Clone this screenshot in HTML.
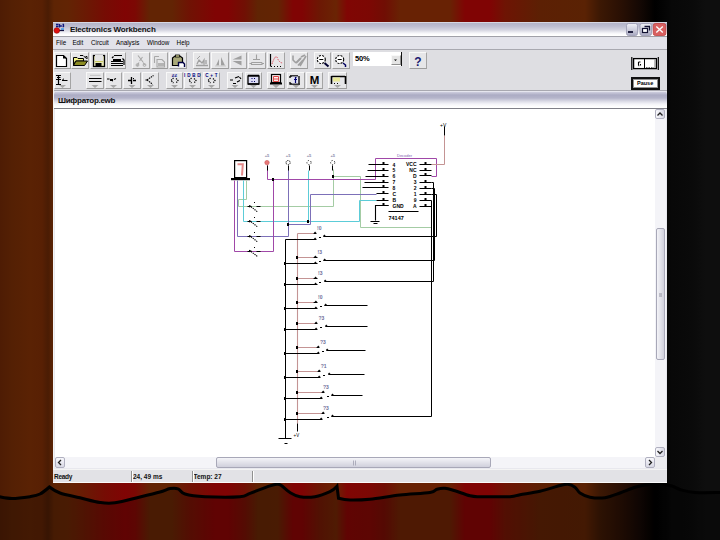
<!DOCTYPE html>
<html><head><meta charset="utf-8">
<style>
*{margin:0;padding:0;box-sizing:border-box}
html,body{width:720px;height:540px;overflow:hidden}
body{position:relative;font-family:"Liberation Sans",sans-serif;
background:linear-gradient(90deg,#4e1c04 0px,#542004 12px,#5a2204 30px,#582004 42px,#4a1c04 48px,#5e2404 54px,#622404 68px,#6a1a04 85px,#760c04 105px,#800404 125px,#7c0804 135px,#622404 150px,#622404 172px,#701204 190px,#800404 215px,#800404 228px,#701004 245px,#602404 258px,#622404 278px,#800404 293px,#800404 302px,#6c1804 320px,#6a2404 336px,#800604 347px,#7c0804 370px,#700e04 385px,#682204 400px,#682204 450px,#800404 465px,#800404 490px,#6e1404 505px,#5c2004 540px,#5a2204 585px,#3c1804 600px,#2a1004 620px,#140804 640px,#000000 655px,#080808 672px,#0a0a0a 692px,#0e0e0e 706px,#0e0e0e 720px);}
.a{position:absolute}
svg{position:absolute;left:0;top:0}
.btn{position:absolute;background:#e6e6e8;border-top:1px solid #f8f8f8;border-left:1px solid #f8f8f8;border-right:1px solid #a4a4a4;border-bottom:1px solid #9c9c9c}
.txt{position:absolute;white-space:nowrap;color:#111;line-height:1}
</style></head><body>
<svg width="720" height="540" viewBox="0 0 720 540">
<path d="M-2.0,496.5 C0.3,496.8 6.7,498.5 12.0,498.5 C17.3,498.5 25.3,497.4 30.0,496.7 C34.7,495.9 36.8,495.6 40.0,494.0 C43.2,492.4 49.4,487.0 49.4,487.0 C49.4,487.0 54.9,491.2 60.0,493.0 C65.1,494.8 73.3,496.2 80.0,497.8 C86.7,499.4 94.2,501.7 100.0,502.5 C105.8,503.3 108.3,503.7 115.0,502.8 C121.7,501.9 132.5,498.8 140.0,497.0 C147.5,495.2 155.0,493.4 160.0,492.0 C165.0,490.6 167.0,489.1 170.0,488.6 C173.0,488.1 175.5,487.9 178.0,488.8 C180.5,489.7 180.5,492.7 185.0,494.0 C189.5,495.3 195.8,496.2 205.0,496.7 C214.2,497.1 232.5,497.3 240.0,496.7 C247.5,496.1 245.0,495.1 250.0,493.3 C255.0,491.5 265.5,487.3 270.0,485.8 C274.5,484.3 275.2,484.3 277.0,484.2 C278.8,484.1 278.8,483.8 281.0,485.2 C283.2,486.6 286.8,490.6 290.0,492.5 C293.2,494.4 295.8,496.0 300.0,496.7 C304.2,497.4 310.0,497.5 315.0,496.7 C320.0,495.9 326.3,493.4 330.0,491.7 C333.7,490.0 337.0,486.3 337.0,486.3 C337.0,486.3 338.5,498.3 338.5,498.3 C338.5,498.3 344.8,499.9 350.0,500.0 C355.2,500.1 361.7,500.0 370.0,499.2 C378.3,498.4 390.0,496.1 400.0,495.0 C410.0,493.9 423.8,493.5 430.0,492.5 C436.2,491.5 434.5,489.9 437.0,489.2 C439.5,488.5 442.0,488.0 445.0,488.3 C448.0,488.6 450.8,489.6 455.0,490.8 C459.2,492.1 465.8,494.8 470.0,495.8 C474.2,496.8 473.3,496.6 480.0,496.7 C486.7,496.8 503.3,497.0 510.0,496.7 C516.7,496.4 515.0,495.6 520.0,494.7 C525.0,493.8 533.3,492.8 540.0,491.3 C546.7,489.8 555.3,486.7 560.0,485.5 C564.7,484.3 565.5,484.0 568.0,484.3 C570.5,484.6 573.0,485.8 575.0,487.2 C577.0,488.6 577.5,491.3 580.0,493.0 C582.5,494.7 585.8,496.4 590.0,497.2 C594.2,498.0 600.0,498.4 605.0,497.7 C610.0,497.0 615.0,494.8 620.0,493.0 C625.0,491.2 630.8,488.5 635.0,487.2 C639.2,485.9 640.8,485.6 645.0,485.0 C649.2,484.4 655.5,483.6 660.0,483.8 C664.5,484.0 668.7,485.1 672.0,486.0 C675.3,486.9 676.2,488.4 680.0,489.5 C683.8,490.6 688.0,492.0 695.0,492.5 C702.0,493.0 717.5,492.5 722.0,492.5 L722,542 L-2,542 Z" fill="rgba(0,0,0,0.25)"/>
<path d="M-2.0,496.5 C0.3,496.8 6.7,498.5 12.0,498.5 C17.3,498.5 25.3,497.4 30.0,496.7 C34.7,495.9 36.8,495.6 40.0,494.0 C43.2,492.4 49.4,487.0 49.4,487.0 C49.4,487.0 54.9,491.2 60.0,493.0 C65.1,494.8 73.3,496.2 80.0,497.8 C86.7,499.4 94.2,501.7 100.0,502.5 C105.8,503.3 108.3,503.7 115.0,502.8 C121.7,501.9 132.5,498.8 140.0,497.0 C147.5,495.2 155.0,493.4 160.0,492.0 C165.0,490.6 167.0,489.1 170.0,488.6 C173.0,488.1 175.5,487.9 178.0,488.8 C180.5,489.7 180.5,492.7 185.0,494.0 C189.5,495.3 195.8,496.2 205.0,496.7 C214.2,497.1 232.5,497.3 240.0,496.7 C247.5,496.1 245.0,495.1 250.0,493.3 C255.0,491.5 265.5,487.3 270.0,485.8 C274.5,484.3 275.2,484.3 277.0,484.2 C278.8,484.1 278.8,483.8 281.0,485.2 C283.2,486.6 286.8,490.6 290.0,492.5 C293.2,494.4 295.8,496.0 300.0,496.7 C304.2,497.4 310.0,497.5 315.0,496.7 C320.0,495.9 326.3,493.4 330.0,491.7 C333.7,490.0 337.0,486.3 337.0,486.3 C337.0,486.3 338.5,498.3 338.5,498.3 C338.5,498.3 344.8,499.9 350.0,500.0 C355.2,500.1 361.7,500.0 370.0,499.2 C378.3,498.4 390.0,496.1 400.0,495.0 C410.0,493.9 423.8,493.5 430.0,492.5 C436.2,491.5 434.5,489.9 437.0,489.2 C439.5,488.5 442.0,488.0 445.0,488.3 C448.0,488.6 450.8,489.6 455.0,490.8 C459.2,492.1 465.8,494.8 470.0,495.8 C474.2,496.8 473.3,496.6 480.0,496.7 C486.7,496.8 503.3,497.0 510.0,496.7 C516.7,496.4 515.0,495.6 520.0,494.7 C525.0,493.8 533.3,492.8 540.0,491.3 C546.7,489.8 555.3,486.7 560.0,485.5 C564.7,484.3 565.5,484.0 568.0,484.3 C570.5,484.6 573.0,485.8 575.0,487.2 C577.0,488.6 577.5,491.3 580.0,493.0 C582.5,494.7 585.8,496.4 590.0,497.2 C594.2,498.0 600.0,498.4 605.0,497.7 C610.0,497.0 615.0,494.8 620.0,493.0 C625.0,491.2 630.8,488.5 635.0,487.2 C639.2,485.9 640.8,485.6 645.0,485.0 C649.2,484.4 655.5,483.6 660.0,483.8 C664.5,484.0 668.7,485.1 672.0,486.0 C675.3,486.9 676.2,488.4 680.0,489.5 C683.8,490.6 688.0,492.0 695.0,492.5 C702.0,493.0 717.5,492.5 722.0,492.5" fill="none" stroke="#000" stroke-width="3"/>
</svg>
<!-- window -->
<div class="a" style="left:53px;top:22px;width:614px;height:461px;background:#e2e2e8;border-left:1px solid #f4f4f4;border-bottom:1px solid #f8f8f8"></div>
<div class="a" style="left:53px;top:22px;width:614px;height:14px;background:linear-gradient(180deg,#f8f8fa 0px,#b4b4c8 1px,#bcbccf 4px,#d4d4e0 8px,#f4f4f8 11px,#ffffff 13px)"></div>
<div class="txt" style="left:70px;top:26px;font-size:8px;font-weight:bold;letter-spacing:-0.15px">Electronics Workbench</div>
<div class="a" style="left:53px;top:36px;width:614px;height:14px;background:#e2e2ea;border-top:1px solid #a0a0a8;border-bottom:1px solid #a8a8b0"></div>
<div class="txt" style="left:56px;top:39.6px;font-size:6.3px;color:#000">File</div>
<div class="txt" style="left:72.4px;top:39.6px;font-size:6.3px;color:#000">Edit</div>
<div class="txt" style="left:91px;top:39.6px;font-size:6.3px;color:#000">Circuit</div>
<div class="txt" style="left:116px;top:39.6px;font-size:6.3px;color:#000">Analysis</div>
<div class="txt" style="left:147px;top:39.6px;font-size:6.3px;color:#000">Window</div>
<div class="txt" style="left:176.6px;top:39.6px;font-size:6.3px;color:#000">Help</div>
<div class="a" style="left:54px;top:50px;width:613px;height:41px;background:#dedee2;border-bottom:1px solid #a8a8b0"></div>
<div class="btn" style="left:54px;top:52px;width:17px;height:17px"></div><div class="btn" style="left:71px;top:52px;width:18px;height:17px"></div><div class="btn" style="left:90px;top:52px;width:18px;height:17px"></div><div class="btn" style="left:108px;top:52px;width:18px;height:17px"></div><div class="btn" style="left:132px;top:52px;width:18px;height:17px"></div><div class="btn" style="left:151px;top:52px;width:17px;height:17px"></div><div class="btn" style="left:169px;top:52px;width:18px;height:17px"></div><div class="btn" style="left:193px;top:52px;width:17px;height:17px"></div><div class="btn" style="left:211px;top:52px;width:18px;height:17px"></div><div class="btn" style="left:230px;top:52px;width:17px;height:17px"></div><div class="btn" style="left:248px;top:52px;width:18px;height:17px"></div><div class="btn" style="left:267px;top:52px;width:18px;height:17px"></div><div class="btn" style="left:290px;top:52px;width:18px;height:17px"></div><div class="btn" style="left:314px;top:52px;width:17px;height:17px"></div><div class="btn" style="left:332px;top:52px;width:18px;height:17px"></div><div class="btn" style="left:409px;top:52px;width:18px;height:17px"></div><div class="btn" style="left:54px;top:72px;width:17px;height:17px"></div><div class="btn" style="left:86px;top:72px;width:18px;height:17px"></div><div class="btn" style="left:105px;top:72px;width:17px;height:17px"></div><div class="btn" style="left:123px;top:72px;width:18px;height:17px"></div><div class="btn" style="left:142px;top:72px;width:17px;height:17px"></div><div class="btn" style="left:166px;top:72px;width:17px;height:17px"></div><div class="btn" style="left:184px;top:72px;width:17px;height:17px"></div><div class="btn" style="left:203px;top:72px;width:17px;height:17px"></div><div class="btn" style="left:227px;top:72px;width:16px;height:17px"></div><div class="btn" style="left:245px;top:72px;width:17px;height:17px"></div><div class="btn" style="left:267px;top:72px;width:18px;height:17px"></div><div class="btn" style="left:287px;top:72px;width:18px;height:17px"></div><div class="btn" style="left:306px;top:72px;width:17px;height:17px"></div><div class="btn" style="left:328px;top:72px;width:19px;height:17px"></div>
<!-- combobox -->
<div class="a" style="left:353px;top:52px;width:49px;height:14px;background:#fff;border-right:1px solid #111"></div>
<div class="a" style="left:391px;top:55px;width:10px;height:10px;background:#e4e4e4;border-top:1px solid #f8f8f8;border-left:1px solid #f8f8f8;border-right:1px solid #909090;border-bottom:1px solid #909090"></div>
<div class="txt" style="left:355px;top:54.5px;font-size:7.5px;font-weight:bold;color:#000;letter-spacing:-0.2px">50%</div>
<!-- power & pause -->

<div class="a" style="left:631px;top:77px;width:29px;height:13px;background:#fff;border:2px solid #111;box-shadow:inset 0 0 0 1px #909090"></div>
<div class="txt" style="left:637px;top:80.5px;font-size:5.5px;font-weight:bold;color:#000">Pause</div>
<!-- child window -->
<div class="a" style="left:54px;top:91px;width:613px;height:378px;background:#e8e8ee;border-radius:4px 4px 0 0"></div>
<div class="a" style="left:54px;top:91px;width:613px;height:18px;border-radius:4px 4px 0 0;background:linear-gradient(180deg,#f4f4f8 0px,#c8c8da 1.5px,#acacc4 4px,#b4b4ca 7px,#d8d8e4 10px,#f4f4f8 13px,#ffffff 16px);border-bottom:1px solid #808088"></div>
<div class="txt" style="left:58px;top:97px;font-size:8px;font-weight:bold;letter-spacing:-0.3px">Шифратор.ewb</div>
<div class="a" style="left:55px;top:109px;width:600px;height:348px;background:#fff"></div>
<div class="a" style="left:655px;top:109px;width:11px;height:348px;background:#f4f4f8"></div>
<div class="a" style="left:55px;top:457px;width:600px;height:11px;background:#f4f4f8"></div>
<!-- scroll parts -->
<div class="a" style="left:655px;top:109px;width:10px;height:10px;border:1px solid #b0b0c0;border-radius:2px;background:linear-gradient(90deg,#f8f8fc,#d8d8e4)"></div>
<div class="a" style="left:656px;top:228px;width:9px;height:132px;border:1px solid #a8a8b8;border-radius:2px;background:linear-gradient(90deg,#f4f4f8,#d0d0dc)"></div>
<div class="a" style="left:655px;top:447px;width:10px;height:10px;border:1px solid #b0b0c0;border-radius:2px;background:linear-gradient(90deg,#f8f8fc,#d8d8e4)"></div>
<div class="a" style="left:55px;top:457px;width:10px;height:11px;border:1px solid #b0b0c0;border-radius:2px;background:linear-gradient(180deg,#f8f8fc,#d8d8e4)"></div>
<div class="a" style="left:216px;top:457px;width:275px;height:11px;border:1px solid #a8a8b8;border-radius:2px;background:linear-gradient(180deg,#f4f4f8,#d0d0dc)"></div>
<div class="a" style="left:645px;top:457px;width:10px;height:11px;border:1px solid #b0b0c0;border-radius:2px;background:linear-gradient(180deg,#f8f8fc,#d8d8e4)"></div>
<div class="a" style="left:655px;top:457px;width:11px;height:11px;background:#ececf0"></div>
<!-- status -->
<div class="a" style="left:53px;top:469px;width:614px;height:14px;background:#e2e2e6;border-top:1px solid #f4f4f4;border-bottom:1px solid #fafafa"></div>
<div class="txt" style="left:54px;top:474.2px;font-size:6.5px;font-weight:bold;letter-spacing:-0.3px">Ready</div>
<div class="txt" style="left:133px;top:474.2px;font-size:6.5px;font-weight:bold">24, 49 ms</div>
<div class="txt" style="left:193.5px;top:474.2px;font-size:6.5px;font-weight:bold">Temp: 27</div>
<div class="a" style="left:131px;top:471px;width:2px;height:11px;border-left:1px solid #909090;border-right:1px solid #fff"></div>
<div class="a" style="left:192px;top:471px;width:2px;height:11px;border-left:1px solid #909090;border-right:1px solid #fff"></div>
<div class="a" style="left:252px;top:471px;width:2px;height:11px;border-left:1px solid #909090;border-right:1px solid #fff"></div>
<svg width="720" height="540" viewBox="0 0 720 540">
<path d="M59.0,85 h7 l-3.5,3 z" fill="#a8a8a8"/><path d="M91.5,85 h7 l-3.5,3 z" fill="#a8a8a8"/><path d="M110.0,85 h7 l-3.5,3 z" fill="#a8a8a8"/><path d="M128.5,85 h7 l-3.5,3 z" fill="#a8a8a8"/><path d="M147.0,85 h7 l-3.5,3 z" fill="#a8a8a8"/><path d="M171.0,85 h7 l-3.5,3 z" fill="#a8a8a8"/><path d="M189.0,85 h7 l-3.5,3 z" fill="#a8a8a8"/><path d="M208.0,85 h7 l-3.5,3 z" fill="#a8a8a8"/><path d="M231.5,85 h7 l-3.5,3 z" fill="#a8a8a8"/><path d="M250.0,85 h7 l-3.5,3 z" fill="#a8a8a8"/><path d="M272.5,85 h7 l-3.5,3 z" fill="#a8a8a8"/><path d="M292.5,85 h7 l-3.5,3 z" fill="#a8a8a8"/><path d="M311.0,85 h7 l-3.5,3 z" fill="#a8a8a8"/><path d="M334.0,85 h7 l-3.5,3 z" fill="#a8a8a8"/>
<path d="M56.5,55.5 H63.5 L66.5,58.5 V66.5 H56.5 Z" fill="#fff" stroke="#000" stroke-width="1.2"/>
<path d="M63,55 L63,58.5 L67,58.5 Z" fill="#000"/>
<path d="M73.5,57.5 H77 L78,58.5 H83.5 V61 H75.5 L73.5,65.5 Z" fill="#f4f488" stroke="#000" stroke-width="1"/>
<path d="M73.5,65.5 L76,61 H87.5 L84.5,65.5 Z" fill="#8c8c22" stroke="#000" stroke-width="1"/>
<path d="M80,55.5 H83 M83.5,56 L86.5,58.5 M85.5,56.5 L87,56.5 L87,59" fill="none" stroke="#000" stroke-width="1"/>
<rect x="93.5" y="55.5" width="11" height="11" fill="#e8e8b8" stroke="#000" stroke-width="1.3"/>
<rect x="95" y="55" width="8" height="6.5" fill="#e4e4e4"/>
<rect x="95" y="61" width="8" height="1" fill="#c8c860"/>
<rect x="95.5" y="63" width="6" height="3.5" fill="#000"/>
<path d="M114,55.5 H122 M112,58 L113.5,56.5 M114.5,59.5 H119.5 M111,61.5 H123 M111,63.5 H123 M111,65.5 H123 M122.5,58.5 L124,60 V65" fill="none" stroke="#000" stroke-width="1.2"/>
<rect x="113" y="59" width="8" height="2" fill="#000"/>
<path d="M138,55.5 L143,62 M142.5,57 L139.5,61 M139,62.5 L137,66 M143,62.5 L145,65" fill="none" stroke="#a8a8a8" stroke-width="1.1"/>
<circle cx="137.5" cy="65" r="1.4" fill="none" stroke="#a8a8a8" stroke-width="0.9"/><circle cx="144.5" cy="65" r="1.4" fill="none" stroke="#a8a8a8" stroke-width="0.9"/>
<path d="M154.5,56.5 H159 M154.5,56.5 V63 M157,59.5 H162 L164.5,62 V67 H157 Z" fill="none" stroke="#a8a8a8" stroke-width="1.1"/>
<rect x="158" y="63" width="6" height="3" fill="#b4b4b4"/>
<path d="M172.5,58 L175,56 H180 L182.5,58 V65.5 H172.5 Z" fill="#a8a878" stroke="#000" stroke-width="1.2"/>
<rect x="175.5" y="55" width="4" height="2" fill="#e8e8a0" stroke="#000" stroke-width="0.8"/>
<path d="M178.5,66.5 V62.5 H183 L184.5,64 V67" fill="#fff" stroke="#000044" stroke-width="1.4"/>
<path d="M196,65.5 H208 M197,64 L199,60 L202,63 L204,60 V64.5 M206,60 V64" fill="none" stroke="#a0a0a0" stroke-width="1.3"/>
<path d="M197,59 L200,56" stroke="#a0a0a0" stroke-width="1"/>
<path d="M216,65.5 L219,59 V65.5 Z M221,57 V65.5 L225,65.5 Z" fill="#a0a0a0"/>
<path d="M215,66 H226" stroke="#c8c8c8" stroke-width="1"/>
<path d="M232.5,59.5 L241.5,55.5 V59.5 Z M232.5,61 H241.5 L241.5,65.5 Z" fill="#a0a0a0"/>
<path d="M256.5,54.5 V59.5 M253,59.5 H260 M251.5,62.5 V64.5 H262 V62.5 M251.5,62.5 H262 M249.5,63.5 H251 M262,63.5 H264" fill="none" stroke="#a0a0a0" stroke-width="1.1"/>
<path d="M270.5,54 V66.5" stroke="#000" stroke-width="1.2"/>
<path d="M271,66.5 H283" stroke="#000" stroke-width="1.1" stroke-dasharray="1,2"/>
<path d="M272,64 Q275,55 277,57 Q279,63 283,63" fill="none" stroke="#e04050" stroke-width="1" stroke-dasharray="1.3,1"/>
<path d="M293,55.5 V60 L296,63 M306,56 L300,66 M298,65.5 L303,60 M301,57 L305,55" fill="none" stroke="#a0a0a0" stroke-width="1.6"/>
<path d="M296,63 L301,58" stroke="#a0a0a0" stroke-width="2"/>
<circle cx="321.3" cy="59.5" r="4" fill="#fff" stroke="#000" stroke-width="1.1" stroke-dasharray="2,1.2"/>
<path d="M319.3,59.5 H323.3" stroke="#000" stroke-width="1"/>
<circle cx="339.7" cy="59.5" r="4" fill="#fff" stroke="#000" stroke-width="1.1" stroke-dasharray="2,1.2"/>
<path d="M337.7,59.5 H341.7" stroke="#000" stroke-width="1"/>
<path d="M324.5,63 L328.5,66.5" stroke="#000030" stroke-width="2"/>
<path d="M343,63 L345.5,65 V67" fill="none" stroke="#000060" stroke-width="1.5"/>
<text x="418" y="66" font-size="12" font-weight="bold" fill="#1a1a70" text-anchor="middle" font-family="Liberation Sans">?</text>
<path d="M394,59.5 h3 l-1.5,1.5 z" fill="#000"/>
<path d="M56,75.5 H61 M57,77.5 H60.5 M56,79.5 H61 M56,84.5 H61 M58.5,75.5 V84.5 M62,80.5 H67.5" fill="none" stroke="#000" stroke-width="1.2"/>
<path d="M62.5,79.5 L64,79" stroke="#000" stroke-width="1"/>
<path d="M89,78.5 H101.5 M89,81.5 H101.5" stroke="#000" stroke-width="1.1"/>
<path d="M90,75.3 H100.5" stroke="#c0c0c0" stroke-width="1"/>
<path d="M107,79 H109.5 M110,79.5 L113,81 M114,79.5 L116,78.5" fill="none" stroke="#000" stroke-width="1.1"/>
<rect x="110" y="79" width="3" height="2" fill="#000"/>
<path d="M128,80.5 H131 M133,80.5 H136 M131.5,77 V84" fill="none" stroke="#000" stroke-width="1.3"/>
<path d="M133,79 L134,78" stroke="#000" stroke-width="1"/>
<path d="M147,80 L150.5,77.5 L153.5,75.5 M147,80 L150.5,82.5 L152.5,84.5 M145.5,80 H147" fill="none" stroke="#000" stroke-width="1.1" stroke-dasharray="1.5,0.8"/>
<text x="174.5" y="77" font-size="4.5" font-weight="bold" fill="#000080" text-anchor="middle" font-family="Liberation Sans" letter-spacing="0.3">&#8800;&#8800;</text>
<path d="M173.5,78 L171.0,80.5 L173.5,83 M176.0,78.5 L178.0,80.5 L176.0,83" fill="none" stroke="#000" stroke-width="1.2" stroke-dasharray="1.2,0.9"/>
<text x="192.5" y="77" font-size="4.5" font-weight="bold" fill="#000080" text-anchor="middle" font-family="Liberation Sans" letter-spacing="0.3">I D B D</text>
<path d="M191.5,78 L189.0,80.5 L191.5,83 M194.0,78.5 L196.0,80.5 L194.0,83" fill="none" stroke="#000" stroke-width="1.2" stroke-dasharray="1.2,0.9"/>
<text x="211.5" y="77" font-size="4.5" font-weight="bold" fill="#000080" text-anchor="middle" font-family="Liberation Sans" letter-spacing="0.3">C + T</text>
<path d="M210.5,78 L208.0,80.5 L210.5,83 M213.0,78.5 L215.0,80.5 L213.0,83" fill="none" stroke="#000" stroke-width="1.2" stroke-dasharray="1.2,0.9"/>
<path d="M230,80 H233 M235,78 L239,76.5 M239.5,77 L241,79 M233,83.5 H236 M237,82 L240,80.5" fill="none" stroke="#000" stroke-width="1.2"/>
<rect x="248" y="76" width="11" height="8" fill="#dcdcf4" stroke="#000" stroke-width="1.3"/>
<path d="M248,75.5 H259 M248,84 H259" stroke="#000" stroke-width="1.6"/>
<path d="M252,78 V79 M254.5,78 V79 M252,81 V82 M254.5,81 V82" stroke="#000060" stroke-width="1"/>
<rect x="271.5" y="74.5" width="9" height="8" fill="#fbf0f0" stroke="#000" stroke-width="1.2"/>
<path d="M273.5,76.5 H278.5 V81.5 H273.5 Z M273.5,79 H278.5" fill="none" stroke="#e04848" stroke-width="1"/>
<rect x="270" y="82.5" width="12" height="2" fill="#000"/>
<path d="M290,76 H298 M290,76 V78 M290,82 V84 H300 M299,76 V83" fill="none" stroke="#000" stroke-width="1.3"/>
<rect x="292" y="76.5" width="6" height="7" fill="#e4e4f4"/>
<path d="M296.5,77.5 H295.5 V83 M294,79.5 H297" fill="none" stroke="#000070" stroke-width="1.2"/>
<text x="314.5" y="84" font-size="11.5" font-weight="bold" fill="#000" text-anchor="middle" font-family="Liberation Sans">M</text>
<path d="M331.5,76 V84 M345.5,76 V84 M331.5,76.5 H345" fill="none" stroke="#000" stroke-width="1.6"/>
<rect x="333" y="77.5" width="7" height="4" fill="#e8e898"/>
<path d="M334,83.5 H335 M337,83.5 H338" stroke="#000" stroke-width="1"/>
<path d="M56,24.5 H58.5 M56,26.5 H58.5 M59.5,24 V27.5 M61,25 V27 M62.5,24.5 H64 M62.5,26.5 H64 M63.5,24.5 V27" fill="none" stroke="#101880" stroke-width="1.3"/>
<rect x="61" y="28" width="3" height="2" fill="#60a8e8"/>
<path d="M59,30.5 H64" stroke="#101040" stroke-width="1.2"/>
<circle cx="56.8" cy="30.5" r="2.8" fill="#e01010" stroke="#900000" stroke-width="0.6"/>
<rect x="626.5" y="23.5" width="11" height="12" rx="2" fill="url(#capg)" stroke="#9898b0" stroke-width="0.8"/>
<rect x="628" y="31" width="5" height="2" fill="#202040"/>
<rect x="640" y="23.5" width="11.5" height="12" rx="2" fill="url(#capg)" stroke="#9898b0" stroke-width="0.8"/>
<path d="M644.5,26.5 H649.5 V30.5" fill="none" stroke="#101030" stroke-width="1.3"/><rect x="642.5" y="28.5" width="5" height="4" fill="#fff" stroke="#101030" stroke-width="1.2"/>
<rect x="653.3" y="23.5" width="12.5" height="12" rx="2" fill="#d86060" stroke="#c04040" stroke-width="0.8"/>
<path d="M656.3,26.5 L662.8,32.5 M662.8,26.5 L656.3,32.5" stroke="#fff" stroke-width="1.4"/>
<defs><linearGradient id="capg" x1="0" y1="0" x2="0" y2="1"><stop offset="0" stop-color="#f0f0f6"/><stop offset="0.6" stop-color="#c8c8d8"/><stop offset="1" stop-color="#a8a8c0"/></linearGradient></defs>
<path d="M631.8,57 V70 M658.3,57 V70" stroke="#000" stroke-width="1.2"/>
<rect x="633.6" y="58.6" width="22.8" height="10" fill="#fff" stroke="#000" stroke-width="1.3"/>
<path d="M644.5,59 V68" stroke="#000" stroke-width="1"/>
<path d="M638.5,62 h2 M638.5,62 v3.5 M640.5,64 v1.5 M638.5,65.8 h0.8" stroke="#000" stroke-width="1.1"/>
<path d="M655,59 V68" stroke="#a0a0a0" stroke-width="1.4"/>
<path d="M646,67.8 H654" stroke="#000" stroke-width="0.8" stroke-dasharray="1.5,1"/>
<path d="M649,58.5 H652" stroke="#000" stroke-width="1" stroke-dasharray="1,1"/>
<path d="M657.5,115.5 L660,113 L662.5,115.5" fill="none" stroke="#202020" stroke-width="1.3"/>
<path d="M657.5,451 L660,453.5 L662.5,451" fill="none" stroke="#202020" stroke-width="1.3"/>
<path d="M61,460 L58.5,462.5 L61,465" fill="none" stroke="#202020" stroke-width="1.3"/>
<path d="M649,460 L651.5,462.5 L649,465" fill="none" stroke="#202020" stroke-width="1.3"/>
<path d="M659,294 H662 M659,296 H662" stroke="#808090" stroke-width="0.8"/>
<path d="M353.5,460.5 V465.5 M355.5,460.5 V465.5" stroke="#a0a0b0" stroke-width="0.8"/>
<rect x="234.6" y="160.6" width="12" height="17" fill="none" stroke="#000" stroke-width="1.2"/>
<path d="M237.5,164.3 H242.8 L242,175.5" fill="none" stroke="#e48a8a" stroke-width="2"/>
<rect x="231" y="178" width="19" height="2.2" fill="#000"/>
<polyline points="246.5,180.5 246.5,199.5 238.5,199.5 238.5,206.5 333.5,206.5 333.5,169.5" fill="none" stroke="#a4cca4" stroke-width="1.0"/>
<polyline points="333.5,176.5 360.5,176.5 360.5,227.5 431.5,227.5" fill="none" stroke="#a4cca4" stroke-width="1.0"/>
<polyline points="243.5,180.5 243.5,221.5 359.5,221.5 359.5,200.5 376.5,200.5" fill="none" stroke="#5cccd8" stroke-width="1.0"/>
<polyline points="308.5,170.5 308.5,221.5" fill="none" stroke="#5cccd8" stroke-width="1.0"/>
<polyline points="237.5,180.5 237.5,236.5 288.5,236.5 288.5,166.5" fill="none" stroke="#7c70b8" stroke-width="1.0"/>
<polyline points="288.5,224.5 310.5,224.5 310.5,194.5 376.5,194.5" fill="none" stroke="#7c70b8" stroke-width="1.0"/>
<polyline points="234.5,180.5 234.5,251.5 273.5,251.5 273.5,179.5" fill="none" stroke="#a048a8" stroke-width="1.0"/>
<polyline points="267.5,165.5 267.5,179.5 375.5,179.5 375.5,158.5 436.5,158.5 436.5,176.5 431.5,176.5" fill="none" stroke="#a048a8" stroke-width="1.0"/>
<polyline points="431.5,164.5 444.5,164.5 444.5,135.5" fill="none" stroke="#c49494" stroke-width="1.0"/>
<line x1="444.5" y1="135.5" x2="444.5" y2="126.5" stroke="#000" stroke-width="1"/>
<text x="440" y="127" font-size="5" fill="#000" text-anchor="start" font-family="Liberation Sans" >+V</text>
<rect x="272" y="178" width="2" height="3" fill="#000"/>
<rect x="287" y="223" width="2" height="3" fill="#000"/>
<rect x="307" y="220" width="2" height="3" fill="#000"/>
<rect x="332" y="175" width="2" height="3" fill="#000"/>
<circle cx="267" cy="162.6" r="2.2" fill="#e87878" stroke="#c85858" stroke-width="0.6"/>
<circle cx="288.1" cy="162.6" r="2.1" fill="none" stroke="#000" stroke-width="0.9" stroke-dasharray="1.2,0.8"/>
<circle cx="309" cy="162.6" r="2.1" fill="none" stroke="#000" stroke-width="0.9" stroke-dasharray="1,1.6"/>
<circle cx="332.7" cy="162.6" r="2.1" fill="none" stroke="#000" stroke-width="0.9" stroke-dasharray="1,1.6"/>
<line x1="267.5" y1="165.5" x2="267.5" y2="170.5" stroke="#000" stroke-width="1"/>
<text x="267" y="157" font-size="4" fill="#8888a8" text-anchor="middle" font-family="Liberation Sans" font-weight="bold">+5</text>
<line x1="288.5" y1="165.5" x2="288.5" y2="170.5" stroke="#000" stroke-width="1"/>
<text x="288.1" y="157" font-size="4" fill="#8888a8" text-anchor="middle" font-family="Liberation Sans" font-weight="bold">+5</text>
<line x1="309.5" y1="165.5" x2="309.5" y2="170.5" stroke="#000" stroke-width="1"/>
<text x="309" y="157" font-size="4" fill="#8888a8" text-anchor="middle" font-family="Liberation Sans" font-weight="bold">+5</text>
<line x1="332.5" y1="165.5" x2="332.5" y2="170.5" stroke="#000" stroke-width="1"/>
<text x="332.7" y="157" font-size="4" fill="#8888a8" text-anchor="middle" font-family="Liberation Sans" font-weight="bold">+5</text>
<line x1="368.5" y1="164.5" x2="388.5" y2="164.5" stroke="#000" stroke-width="1"/>
<rect x="382.5" y="162" width="2" height="2" fill="#000"/>
<line x1="367.5" y1="170.5" x2="388.5" y2="170.5" stroke="#000" stroke-width="1"/>
<rect x="382.5" y="168" width="2" height="2" fill="#000"/>
<line x1="365.5" y1="176.5" x2="388.5" y2="176.5" stroke="#000" stroke-width="1"/>
<rect x="382.5" y="174" width="2" height="2" fill="#000"/>
<line x1="364.5" y1="182.5" x2="388.5" y2="182.5" stroke="#000" stroke-width="1"/>
<rect x="382.5" y="180" width="2" height="2" fill="#000"/>
<line x1="362.5" y1="187.5" x2="388.5" y2="187.5" stroke="#000" stroke-width="1"/>
<rect x="382.5" y="185" width="2" height="2" fill="#000"/>
<line x1="376.5" y1="193.5" x2="388.5" y2="193.5" stroke="#000" stroke-width="1"/>
<rect x="382.5" y="191" width="2" height="2" fill="#000"/>
<line x1="376.5" y1="200.5" x2="388.5" y2="200.5" stroke="#000" stroke-width="1"/>
<rect x="382.5" y="198" width="2" height="2" fill="#000"/>
<line x1="376.5" y1="205.5" x2="388.5" y2="205.5" stroke="#000" stroke-width="1"/>
<rect x="382.5" y="203" width="2" height="2" fill="#000"/>
<text x="392.5" y="166.5" font-size="5" fill="#000" text-anchor="start" font-family="Liberation Sans" font-weight="bold">4</text>
<text x="392.5" y="172.3" font-size="5" fill="#000" text-anchor="start" font-family="Liberation Sans" font-weight="bold">5</text>
<text x="392.5" y="178.2" font-size="5" fill="#000" text-anchor="start" font-family="Liberation Sans" font-weight="bold">6</text>
<text x="392.5" y="184" font-size="5" fill="#000" text-anchor="start" font-family="Liberation Sans" font-weight="bold">7</text>
<text x="392.5" y="189.8" font-size="5" fill="#000" text-anchor="start" font-family="Liberation Sans" font-weight="bold">8</text>
<text x="392.5" y="195.8" font-size="5" fill="#000" text-anchor="start" font-family="Liberation Sans" font-weight="bold">C</text>
<text x="392.5" y="202" font-size="5" fill="#000" text-anchor="start" font-family="Liberation Sans" font-weight="bold">B</text>
<text x="392.5" y="207.8" font-size="5" fill="#000" text-anchor="start" font-family="Liberation Sans" font-weight="bold">GND</text>
<line x1="419.5" y1="164.5" x2="431.5" y2="164.5" stroke="#000" stroke-width="1"/>
<rect x="424.5" y="162" width="2" height="2" fill="#000"/>
<text x="416.5" y="166.1" font-size="5" fill="#000" text-anchor="end" font-family="Liberation Sans" font-weight="bold">VCC</text>
<line x1="419.5" y1="170.5" x2="431.5" y2="170.5" stroke="#000" stroke-width="1"/>
<rect x="424.5" y="168" width="2" height="2" fill="#000"/>
<text x="416.5" y="172" font-size="5" fill="#000" text-anchor="end" font-family="Liberation Sans" font-weight="bold">NC</text>
<line x1="419.5" y1="175.5" x2="431.5" y2="175.5" stroke="#000" stroke-width="1"/>
<rect x="424.5" y="173" width="2" height="2" fill="#000"/>
<text x="416.5" y="177.9" font-size="5" fill="#000" text-anchor="end" font-family="Liberation Sans" font-weight="bold">D</text>
<line x1="419.5" y1="182.5" x2="431.5" y2="182.5" stroke="#000" stroke-width="1"/>
<rect x="424.5" y="180" width="2" height="2" fill="#000"/>
<text x="416.5" y="184" font-size="5" fill="#000" text-anchor="end" font-family="Liberation Sans" font-weight="bold">3</text>
<line x1="419.5" y1="188.5" x2="431.5" y2="188.5" stroke="#000" stroke-width="1"/>
<rect x="424.5" y="186" width="2" height="2" fill="#000"/>
<text x="416.5" y="190.1" font-size="5" fill="#000" text-anchor="end" font-family="Liberation Sans" font-weight="bold">2</text>
<line x1="419.5" y1="194.5" x2="431.5" y2="194.5" stroke="#000" stroke-width="1"/>
<rect x="424.5" y="192" width="2" height="2" fill="#000"/>
<text x="416.5" y="196.2" font-size="5" fill="#000" text-anchor="end" font-family="Liberation Sans" font-weight="bold">1</text>
<line x1="419.5" y1="200.5" x2="431.5" y2="200.5" stroke="#000" stroke-width="1"/>
<rect x="424.5" y="198" width="2" height="2" fill="#000"/>
<text x="416.5" y="202.3" font-size="5" fill="#000" text-anchor="end" font-family="Liberation Sans" font-weight="bold">9</text>
<line x1="419.5" y1="206.5" x2="431.5" y2="206.5" stroke="#000" stroke-width="1"/>
<rect x="424.5" y="204" width="2" height="2" fill="#000"/>
<text x="416.5" y="208.3" font-size="5" fill="#000" text-anchor="end" font-family="Liberation Sans" font-weight="bold">A</text>
<line x1="388.5" y1="211.5" x2="418.5" y2="211.5" stroke="#000" stroke-width="1"/>
<text x="388.5" y="219.5" font-size="5.5" fill="#000" text-anchor="start" font-family="Liberation Sans" font-weight="bold">74147</text>
<polyline points="388.5,205.5 375.5,205.5 375.5,220.5" fill="none" stroke="#000" stroke-width="1.1"/>
<line x1="370.5" y1="221.5" x2="379.5" y2="221.5" stroke="#000" stroke-width="1"/>
<line x1="373.5" y1="223.5" x2="377.5" y2="223.5" stroke="#000" stroke-width="1"/>
<text x="397" y="156.5" font-size="4" fill="#8060b0" text-anchor="start" font-family="Liberation Sans" >Decoder</text>
<polyline points="431.5,182.5 433.5,182.5 433.5,281.5 324.5,281.5" fill="none" stroke="#000" stroke-width="1.0"/>
<polyline points="431.5,188.5 434.5,188.5 434.5,260.5 323.5,260.5" fill="none" stroke="#000" stroke-width="1.0"/>
<polyline points="431.5,194.5 436.5,194.5 436.5,236.5 323.5,236.5" fill="none" stroke="#000" stroke-width="1.0"/>
<polyline points="431.5,200.5 431.5,200.5 431.5,416.5 331.5,416.5" fill="none" stroke="#000" stroke-width="1.0"/>
<polyline points="431.5,206.5 431.5,206.5 431.5,230.5" fill="none" stroke="#000" stroke-width="1.0"/>
<line x1="324.5" y1="305.5" x2="367.5" y2="305.5" stroke="#000" stroke-width="1"/>
<line x1="325.5" y1="326.5" x2="367.5" y2="326.5" stroke="#000" stroke-width="1"/>
<line x1="326.5" y1="350.5" x2="365.5" y2="350.5" stroke="#000" stroke-width="1"/>
<line x1="328.5" y1="374.5" x2="364.5" y2="374.5" stroke="#000" stroke-width="1"/>
<line x1="331.5" y1="395.5" x2="362.5" y2="395.5" stroke="#000" stroke-width="1"/>
<polyline points="297.5,233.5 297.5,423.5" fill="none" stroke="#c49494" stroke-width="1.1"/>
<line x1="285.5" y1="239.5" x2="285.5" y2="438.5" stroke="#000" stroke-width="1"/>
<line x1="285.5" y1="239.5" x2="316.5" y2="239.5" stroke="#000" stroke-width="1"/>
<path d="M313.79999999999995,239 L315.09999999999997,237.4 L316.4,239 Z" fill="#000"/>
<line x1="297.5" y1="233.5" x2="313.5" y2="233.5" stroke="#c49494" stroke-width="1"/>
<line x1="313.5" y1="233.5" x2="316.5" y2="233.5" stroke="#000" stroke-width="1"/>
<path d="M313.79999999999995,233 L315.09999999999997,231.4 L316.4,233 Z" fill="#000"/>
<rect x="319" y="237" width="2" height="1" fill="#000"/>
<line x1="323.5" y1="236.5" x2="327.5" y2="236.5" stroke="#000" stroke-width="1"/>
<path d="M323.09999999999997,236 L324.4,234.4 L325.7,236 Z" fill="#000"/>
<text x="317" y="229.9" font-size="5" fill="#6c6c98" text-anchor="start" font-family="Liberation Sans" font-weight="bold">!0</text>
<line x1="285.5" y1="263.5" x2="317.5" y2="263.5" stroke="#000" stroke-width="1"/>
<path d="M314.09999999999997,263 L315.4,261.4 L316.7,263 Z" fill="#000"/>
<rect x="284" y="262" width="2" height="3" fill="#000"/>
<line x1="297.5" y1="257.5" x2="313.5" y2="257.5" stroke="#c49494" stroke-width="1"/>
<line x1="313.5" y1="257.5" x2="317.5" y2="257.5" stroke="#000" stroke-width="1"/>
<path d="M314.09999999999997,257 L315.4,255.4 L316.7,257 Z" fill="#000"/>
<rect x="296" y="256" width="2" height="3" fill="#000"/>
<rect x="319" y="261" width="2" height="1" fill="#000"/>
<line x1="323.5" y1="260.5" x2="327.5" y2="260.5" stroke="#000" stroke-width="1"/>
<path d="M323.4,260 L324.7,258.4 L326.0,260 Z" fill="#000"/>
<text x="317.5" y="253.7" font-size="5" fill="#6c6c98" text-anchor="start" font-family="Liberation Sans" font-weight="bold">!3</text>
<line x1="285.5" y1="284.5" x2="317.5" y2="284.5" stroke="#000" stroke-width="1"/>
<path d="M314.29999999999995,284 L315.59999999999997,282.4 L316.9,284 Z" fill="#000"/>
<rect x="284" y="283" width="2" height="3" fill="#000"/>
<line x1="297.5" y1="278.5" x2="313.5" y2="278.5" stroke="#c49494" stroke-width="1"/>
<line x1="313.5" y1="278.5" x2="317.5" y2="278.5" stroke="#000" stroke-width="1"/>
<path d="M314.29999999999995,278 L315.59999999999997,276.4 L316.9,278 Z" fill="#000"/>
<rect x="296" y="277" width="2" height="3" fill="#000"/>
<rect x="319" y="282" width="2" height="1" fill="#000"/>
<line x1="324.5" y1="281.5" x2="328.5" y2="281.5" stroke="#000" stroke-width="1"/>
<path d="M323.9,281 L325.2,279.4 L326.5,281 Z" fill="#000"/>
<text x="318" y="274.8" font-size="5" fill="#6c6c98" text-anchor="start" font-family="Liberation Sans" font-weight="bold">!3</text>
<line x1="285.5" y1="308.5" x2="317.5" y2="308.5" stroke="#000" stroke-width="1"/>
<path d="M314.59999999999997,308 L315.9,306.4 L317.2,308 Z" fill="#000"/>
<rect x="284" y="307" width="2" height="3" fill="#000"/>
<line x1="297.5" y1="302.5" x2="313.5" y2="302.5" stroke="#c49494" stroke-width="1"/>
<line x1="313.5" y1="302.5" x2="317.5" y2="302.5" stroke="#000" stroke-width="1"/>
<path d="M314.59999999999997,302 L315.9,300.4 L317.2,302 Z" fill="#000"/>
<rect x="296" y="301" width="2" height="3" fill="#000"/>
<rect x="320" y="306" width="2" height="1" fill="#000"/>
<line x1="324.5" y1="305.5" x2="328.5" y2="305.5" stroke="#000" stroke-width="1"/>
<path d="M324.4,305 L325.7,303.4 L327.0,305 Z" fill="#000"/>
<text x="318" y="299.0" font-size="5" fill="#6c6c98" text-anchor="start" font-family="Liberation Sans" font-weight="bold">!0</text>
<line x1="285.5" y1="329.5" x2="317.5" y2="329.5" stroke="#000" stroke-width="1"/>
<path d="M314.79999999999995,329 L316.09999999999997,327.4 L317.4,329 Z" fill="#000"/>
<rect x="284" y="328" width="2" height="3" fill="#000"/>
<line x1="297.5" y1="323.5" x2="314.5" y2="323.5" stroke="#c49494" stroke-width="1"/>
<line x1="314.5" y1="323.5" x2="317.5" y2="323.5" stroke="#000" stroke-width="1"/>
<path d="M314.79999999999995,323 L316.09999999999997,321.4 L317.4,323 Z" fill="#000"/>
<rect x="296" y="322" width="2" height="3" fill="#000"/>
<rect x="320" y="327" width="2" height="1" fill="#000"/>
<line x1="325.5" y1="326.5" x2="329.5" y2="326.5" stroke="#000" stroke-width="1"/>
<path d="M325.0,326 L326.3,324.4 L327.6,326 Z" fill="#000"/>
<text x="318.5" y="319.9" font-size="5" fill="#6c6c98" text-anchor="start" font-family="Liberation Sans" font-weight="bold">?3</text>
<line x1="285.5" y1="353.5" x2="319.5" y2="353.5" stroke="#000" stroke-width="1"/>
<path d="M316.99999999999994,353 L318.29999999999995,351.4 L319.59999999999997,353 Z" fill="#000"/>
<rect x="284" y="352" width="2" height="3" fill="#000"/>
<line x1="297.5" y1="347.5" x2="316.5" y2="347.5" stroke="#c49494" stroke-width="1"/>
<line x1="316.5" y1="347.5" x2="319.5" y2="347.5" stroke="#000" stroke-width="1"/>
<path d="M316.99999999999994,347 L318.29999999999995,345.4 L319.59999999999997,347 Z" fill="#000"/>
<rect x="296" y="346" width="2" height="3" fill="#000"/>
<rect x="322" y="351" width="2" height="1" fill="#000"/>
<line x1="326.5" y1="350.5" x2="330.5" y2="350.5" stroke="#000" stroke-width="1"/>
<path d="M325.9,350 L327.2,348.4 L328.5,350 Z" fill="#000"/>
<text x="320" y="343.9" font-size="5" fill="#6c6c98" text-anchor="start" font-family="Liberation Sans" font-weight="bold">?3</text>
<line x1="285.5" y1="377.5" x2="320.5" y2="377.5" stroke="#000" stroke-width="1"/>
<path d="M317.9,377 L319.2,375.4 L320.5,377 Z" fill="#000"/>
<rect x="284" y="376" width="2" height="3" fill="#000"/>
<line x1="297.5" y1="371.5" x2="317.5" y2="371.5" stroke="#c49494" stroke-width="1"/>
<line x1="317.5" y1="371.5" x2="320.5" y2="371.5" stroke="#000" stroke-width="1"/>
<path d="M317.9,371 L319.2,369.4 L320.5,371 Z" fill="#000"/>
<rect x="296" y="370" width="2" height="3" fill="#000"/>
<rect x="323" y="375" width="2" height="1" fill="#000"/>
<line x1="328.5" y1="374.5" x2="332.5" y2="374.5" stroke="#000" stroke-width="1"/>
<path d="M327.9,374 L329.2,372.4 L330.5,374 Z" fill="#000"/>
<text x="320.8" y="367.9" font-size="5" fill="#6c6c98" text-anchor="start" font-family="Liberation Sans" font-weight="bold">?1</text>
<line x1="285.5" y1="398.5" x2="322.5" y2="398.5" stroke="#000" stroke-width="1"/>
<path d="M319.9,398 L321.2,396.4 L322.5,398 Z" fill="#000"/>
<rect x="284" y="397" width="2" height="3" fill="#000"/>
<line x1="297.5" y1="392.5" x2="321.5" y2="392.5" stroke="#c49494" stroke-width="1"/>
<line x1="321.5" y1="392.5" x2="324.5" y2="392.5" stroke="#000" stroke-width="1"/>
<path d="M321.9,392 L323.2,390.4 L324.5,392 Z" fill="#000"/>
<rect x="296" y="391" width="2" height="3" fill="#000"/>
<rect x="327" y="396" width="2" height="1" fill="#000"/>
<line x1="331.5" y1="395.5" x2="335.5" y2="395.5" stroke="#000" stroke-width="1"/>
<path d="M331.2,395 L332.5,393.4 L333.8,395 Z" fill="#000"/>
<text x="323" y="389.0" font-size="5" fill="#6c6c98" text-anchor="start" font-family="Liberation Sans" font-weight="bold">?3</text>
<line x1="285.5" y1="419.5" x2="322.5" y2="419.5" stroke="#000" stroke-width="1"/>
<path d="M319.9,419 L321.2,417.4 L322.5,419 Z" fill="#000"/>
<rect x="284" y="418" width="2" height="3" fill="#000"/>
<line x1="297.5" y1="413.5" x2="321.5" y2="413.5" stroke="#c49494" stroke-width="1"/>
<line x1="321.5" y1="413.5" x2="324.5" y2="413.5" stroke="#000" stroke-width="1"/>
<path d="M321.9,413 L323.2,411.4 L324.5,413 Z" fill="#000"/>
<rect x="296" y="412" width="2" height="3" fill="#000"/>
<rect x="327" y="417" width="2" height="1" fill="#000"/>
<line x1="331.5" y1="416.5" x2="335.5" y2="416.5" stroke="#000" stroke-width="1"/>
<path d="M331.2,416 L332.5,414.4 L333.8,416 Z" fill="#000"/>
<text x="323" y="410.0" font-size="5" fill="#6c6c98" text-anchor="start" font-family="Liberation Sans" font-weight="bold">?3</text>
<line x1="297.5" y1="423.5" x2="297.5" y2="431.5" stroke="#000" stroke-width="1"/>
<text x="293.5" y="437" font-size="4.5" fill="#000" text-anchor="start" font-family="Liberation Sans" >+V</text>
<line x1="278.5" y1="438.5" x2="291.5" y2="438.5" stroke="#000" stroke-width="1"/>
<line x1="284.5" y1="443.5" x2="287.5" y2="443.5" stroke="#000" stroke-width="1"/>
<line x1="247.5" y1="206.5" x2="250.5" y2="206.5" stroke="#000" stroke-width="1"/>
<path d="M249,205.0 L252,206.3 L249,207.60000000000002" fill="#000"/>
<line x1="251" y1="206.8" x2="257.5" y2="211.8" stroke="#000" stroke-width="1.1" stroke-dasharray="1.3,0.9"/>
<rect x="254" y="202" width="1" height="1" fill="#000"/>
<line x1="256.5" y1="206.5" x2="260.5" y2="206.5" stroke="#000" stroke-width="1"/>
<line x1="247.5" y1="221.5" x2="250.5" y2="221.5" stroke="#000" stroke-width="1"/>
<path d="M249,220.0 L252,221.3 L249,222.60000000000002" fill="#000"/>
<line x1="251" y1="221.8" x2="257.5" y2="226.8" stroke="#000" stroke-width="1.1" stroke-dasharray="1.3,0.9"/>
<rect x="254" y="217" width="1" height="1" fill="#000"/>
<line x1="256.5" y1="221.5" x2="260.5" y2="221.5" stroke="#000" stroke-width="1"/>
<line x1="247.5" y1="236.5" x2="250.5" y2="236.5" stroke="#000" stroke-width="1"/>
<path d="M249,235.0 L252,236.3 L249,237.60000000000002" fill="#000"/>
<line x1="251" y1="236.8" x2="257.5" y2="241.8" stroke="#000" stroke-width="1.1" stroke-dasharray="1.3,0.9"/>
<rect x="254" y="232" width="1" height="1" fill="#000"/>
<line x1="256.5" y1="236.5" x2="260.5" y2="236.5" stroke="#000" stroke-width="1"/>
<line x1="247.5" y1="251.5" x2="250.5" y2="251.5" stroke="#000" stroke-width="1"/>
<path d="M249,249.7 L252,251 L249,252.3" fill="#000"/>
<line x1="251" y1="251.5" x2="257.5" y2="256.5" stroke="#000" stroke-width="1.1" stroke-dasharray="1.3,0.9"/>
<rect x="254" y="247" width="1" height="1" fill="#000"/>
<line x1="256.5" y1="251.5" x2="260.5" y2="251.5" stroke="#000" stroke-width="1"/>
</svg>
</body></html>
